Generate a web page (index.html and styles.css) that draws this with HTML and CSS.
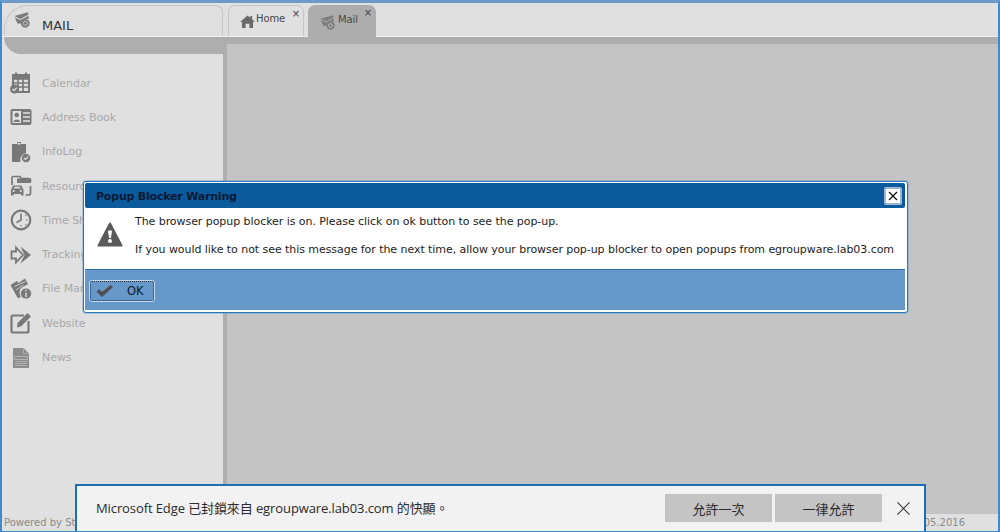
FILE: index.html
```
<!DOCTYPE html>
<html lang="en">
<head>
<meta charset="utf-8">
<title>MAIL</title>
<link rel="stylesheet" href="styles.css">
</head>
<body>
<svg class="defs" width="0" height="0" aria-hidden="true">
  <symbol id="i-mail" viewBox="0 0 22 22">
    <path d="M0.500 5.500 L19 0.500 L20 3.500 L9 9.500 Z" fill="currentColor"/>
    <path d="M1 7.500 L9 11 L20 5 L20.500 9.500 A6.500 6.500 0 0 0 12 15 L5 16 Z" fill="currentColor"/>
    <circle cx="15.500" cy="15.500" r="6" fill="currentColor"/>
    <circle cx="15.500" cy="15.500" r="2.800" fill="none" stroke="#d8d8d8" stroke-width="1"/>
  </symbol>
  <symbol id="i-home" viewBox="0 0 16 14">
    <path d="M0 7.500 L8 0.500 L11 3 L11 1 L13 1 L13 4.700 L16 7.500 L14 7.500 L14 14 L10 14 L10 9.500 L6 9.500 L6 14 L2 14 L2 7.500 Z" fill="currentColor"/>
  </symbol>
  <symbol id="i-calendar" viewBox="0 0 22 22">
    <path d="M3 3 H19 V20 H7 V17 H3 Z" fill="none" stroke="currentColor" stroke-width="2"/>
    <path d="M3 7 H19 M3 11 H19 M3 15 H19 M8 7 V20 M13 7 V20" stroke="currentColor" stroke-width="1.600" fill="none"/>
    <path d="M3 4 H20 V7 H3 Z" fill="currentColor"/>
    <rect x="5" y="0.500" width="2" height="4.500" fill="currentColor"/>
    <rect x="15" y="0.500" width="2" height="4.500" fill="currentColor"/>
    <circle cx="4.500" cy="17" r="4.500" fill="currentColor"/>
    <path d="M2.500 17 L4 18.500 L6.800 15.800" stroke="#e0e0e0" stroke-width="1.200" fill="none"/>
  </symbol>
  <symbol id="i-book" viewBox="0 0 22 18">
    <rect x="0.500" y="1" width="21" height="16" rx="2" fill="currentColor"/>
    <rect x="2.500" y="3" width="8.500" height="12" fill="#e2e2e2"/>
    <circle cx="6.700" cy="7" r="2.300" fill="currentColor"/>
    <path d="M3.500 14 C3.500 10.500 10 10.500 10 14 Z" fill="currentColor"/>
    <path d="M13 5 H20 M13 9 H20 M13 13 H20" stroke="#e2e2e2" stroke-width="1.500"/>
  </symbol>
  <symbol id="i-infolog" viewBox="0 0 22 22">
    <path d="M2 3 H7 V1 H11 V3 H16 V13 A6 6 0 0 0 10.500 21 H2 Z" fill="currentColor"/>
    <rect x="7.500" y="2" width="3" height="1.500" fill="#e0e0e0"/>
    <circle cx="16" cy="17" r="4.500" fill="currentColor" stroke="#e0e0e0" stroke-width="0.600"/>
    <path d="M13.800 17 L15.500 18.500 L18.200 15.600" stroke="#e0e0e0" stroke-width="1.200" fill="none"/>
  </symbol>
  <symbol id="i-resources" viewBox="0 0 22 22">
    <path d="M2 10 V3 A1.500 1.500 0 0 1 3.500 1.500 H10 L11 3.500 H19 A1.500 1.500 0 0 1 20.500 5 V7" fill="none" stroke="currentColor" stroke-width="1.700"/>
    <rect x="7" y="3.500" width="14" height="4.500" fill="currentColor"/>
    <path d="M20.500 11 V18 A2 2 0 0 1 18.500 20 H15.500" fill="none" stroke="currentColor" stroke-width="1.700"/>
    <path d="M1 15 L3 10.500 H11.500 L13.500 15 V20.500 H11 V19 H3.500 V20.500 H1 Z" fill="currentColor"/>
    <circle cx="3.700" cy="16" r="1.100" fill="#e0e0e0"/>
    <circle cx="10.800" cy="16" r="1.100" fill="#e0e0e0"/>
    <path d="M3.800 13.500 L4.800 11.700 H9.700 L10.700 13.500 Z" fill="#e0e0e0"/>
  </symbol>
  <symbol id="i-clock" viewBox="0 0 22 22">
    <circle cx="11" cy="11" r="9.300" fill="none" stroke="currentColor" stroke-width="2.200"/>
    <path d="M11 4.500 V11 L6.500 13.500" fill="none" stroke="currentColor" stroke-width="1.600"/>
    <path d="M15.500 6.500 L16.500 5.500 M17.500 11 H16 M15.500 15.500 L16.500 16.500 M11 17.500 V16" stroke="currentColor" stroke-width="1.200"/>
  </symbol>
  <symbol id="i-tracker" viewBox="0 0 22 22">
    <path d="M1.500 7.500 H6 V3.500 L13 11 L6 18.500 V14.500 H1.500 Z" fill="none" stroke="currentColor" stroke-width="1.800"/>
    <path d="M10.500 2.500 L21 11 L10.500 19.500 L14.500 11 Z" fill="currentColor"/>
  </symbol>
  <symbol id="i-files" viewBox="0 0 22 22">
    <path d="M0.500 7 L7 3 L8.500 5 L15 0.500 L18 6 L12 9.500 A6 6 0 0 0 11 18.500 L8 20.500 Z" fill="currentColor"/>
    <path d="M4.500 8.500 L15.500 3.500 M6 12 L13.500 7" stroke="#e0e0e0" stroke-width="0.800"/>
    <circle cx="16" cy="15.500" r="5.500" fill="currentColor" stroke="#e0e0e0" stroke-width="0.800"/>
    <path d="M16 14.500 V19 M16 11.800 V13" stroke="#e0e0e0" stroke-width="1.400"/>
  </symbol>
  <symbol id="i-web" viewBox="0 0 22 22">
    <path d="M14 3.500 H3 A1.500 1.500 0 0 0 1.500 5 V19 A1.500 1.500 0 0 0 3 20.500 H17 A1.500 1.500 0 0 0 18.500 19 V9" fill="none" stroke="currentColor" stroke-width="2.200"/>
    <path d="M7.500 11 L17.500 1 L21 4.500 L11 14.500 L7 15.500 Z" fill="currentColor"/>
  </symbol>
  <symbol id="i-news" viewBox="0 0 18 22">
    <path d="M1 1 H11.500 L17 6.500 V21 H1 Z" fill="currentColor"/>
    <path d="M2.500 9.500 H15.500 V12.500 H2.500 Z M3 14.500 H15 M3 16.500 H15 M3 18.500 H15" fill="none" stroke="#c4c4c4" stroke-width="0.700"/>
    <path d="M11.500 1 V6.500 H17" fill="none" stroke="#c4c4c4" stroke-width="0.600"/>
  </symbol>
</svg>

<div class="window">
  <header class="top">
    <div class="app-title">
      <svg class="app-icon"><use href="#i-mail"/></svg>
      <span class="app-name">MAIL</span>
    </div>
    <div class="tab">
      <svg class="tab-home"><use href="#i-home"/></svg>
      <span class="tab-label">Home</span>
      <span class="tab-x">×</span>
    </div>
    <div class="tab tab-active">
      <svg class="tab-mail"><use href="#i-mail"/></svg>
      <span class="tab-label">Mail</span>
      <span class="tab-x">×</span>
    </div>
  </header>
  <div class="main">
    <aside class="sidebar">
      <div class="cap"></div>
      <nav class="nav">
        <div class="nav-row"><svg class="nav-icon"><use href="#i-calendar"/></svg><span>Calendar</span></div>
        <div class="nav-row"><svg class="nav-icon"><use href="#i-book"/></svg><span>Address Book</span></div>
        <div class="nav-row"><svg class="nav-icon"><use href="#i-infolog"/></svg><span>InfoLog</span></div>
        <div class="nav-row"><svg class="nav-icon"><use href="#i-resources"/></svg><span>Resources</span></div>
        <div class="nav-row"><svg class="nav-icon"><use href="#i-clock"/></svg><span>Time Sheet</span></div>
        <div class="nav-row"><svg class="nav-icon"><use href="#i-tracker"/></svg><span>Tracking System</span></div>
        <div class="nav-row"><svg class="nav-icon"><use href="#i-files"/></svg><span>File Manager</span></div>
        <div class="nav-row"><svg class="nav-icon"><use href="#i-web"/></svg><span>Website</span></div>
        <div class="nav-row"><svg class="nav-icon nav-icon-soft"><use href="#i-news"/></svg><span>News</span></div>
      </nav>
    </aside>
    <div class="stage">
      <div class="band"></div>
      <div class="stage-row">
        <div class="splitter"></div>
        <main class="content"></main>
      </div>
    </div>
  </div>
  <footer class="footer">
    <span>Powered by Stylite</span>
    <span>05.2016</span>
  </footer>

  <div class="dialog" role="dialog">
    <div class="dialog-title">
      <span class="dialog-heading">Popup Blocker Warning</span>
      <button class="dialog-close" aria-label="Close">
        <svg class="close-glyph" viewBox="0 0 10 10"><path d="M1 1 L9 9 M9 1 L1 9"/></svg>
      </button>
    </div>
    <div class="dialog-body">
      <svg class="warn" viewBox="0 0 26 25">
        <path d="M13 1.500 L24.500 23.500 H1.500 Z" fill="#5a5a5a" stroke="#5a5a5a" stroke-width="2" stroke-linejoin="round"/>
        <path d="M11 8.500 H15 L14 16 H12 Z" fill="#fff"/>
        <circle cx="13" cy="19" r="2" fill="#fff"/>
      </svg>
      <div class="dialog-text">
        <p>The browser popup blocker is on. Please click on ok button to see the pop-up.</p>
        <p>If you would like to not see this message for the next time, allow your browser pop-up blocker to open popups from egroupware.lab03.com</p>
      </div>
    </div>
    <div class="dialog-actions">
      <button class="ok-btn">
        <svg class="ok-check" viewBox="0 0 17 12"><path d="M0.500 6.500 L3 4 L6 7 L14.500 0 L17 2 L6 12 Z" fill="#505050"/></svg>
        <span>OK</span>
      </button>
    </div>
  </div>

  <div class="edge-bar">
    <span class="edge-msg">Microsoft Edge 已封鎖來自 egroupware.lab03.com 的快顯。</span>
    <button class="edge-btn">允許一次</button>
    <button class="edge-btn">一律允許</button>
    <svg class="edge-x" viewBox="0 0 14 14"><path d="M0.500 0.500 L13.500 13.500 M13.500 0.500 L0.500 13.500"/></svg>
  </div>
</div>
</body>
</html>
```
FILE: styles.css
```
* { box-sizing: border-box; }
html, body { margin: 0; padding: 0; }
body { width: 1000px; height: 532px; overflow: hidden; font-family: "DejaVu Sans", sans-serif; }
.defs { position: absolute; }
button { font-family: inherit; margin: 0; padding: 0; }

.window {
  position: relative;
  width: 1000px;
  height: 532px;
  display: flex;
  flex-direction: column;
  background: #e1e0e0;
  border-top: 3px solid #6c9ac7;
  border-left: 2px solid #3f8ad2;
  border-right: 2px solid #3f8ad2;
  border-bottom: 1px solid #3f8ad2;
  overflow: hidden;
}

.top { height: 34px; display: flex; align-items: flex-end; padding-left: 2px; border-bottom: 1px solid #f0f0f0; flex: none; }
.app-title {
  width: 219px;
  height: 31px;
  display: flex;
  align-items: center;
  border: 1px solid #c6c6c6;
  border-bottom: 0;
  border-radius: 24px 7px 0 0;
  background: #e0dfdf;
}
.app-icon { width: 16px; height: 16px; margin: -2px 0 0 9px; color: #7c7c7c; flex: none; }
.app-name { margin-left: 12px; font-size: 13px; color: #333; position: relative; top: 4px; }

.tab {
  position: relative;
  width: 76px;
  height: 31px;
  margin-left: 5px;
  border: 1px solid #c6c6c6;
  border-bottom: 0;
  border-radius: 7px 7px 0 0;
  display: flex;
  align-items: flex-start;
  padding: 7px 0 0 11px;
  font-size: 10px;
  letter-spacing: -0.1px;
  color: #444;
}
.tab-active { width: 68px; height: 32px; margin-left: 4px; margin-bottom: -1px; padding-top: 8px; background: #adadad; border-color: #adadad; color: #484848; }
.tab-home { width: 15px; height: 13px; color: #6a6a6a; margin-top: 2px; margin-right: 1px; flex: none; }
.tab-mail { width: 15px; height: 15px; color: #7d7d7d; margin-top: 1px; margin-right: 3px; flex: none; }
.tab-label { line-height: 12px; }
.tab-x { position: absolute; right: 3px; top: 2px; font-size: 10px; line-height: 12px; color: #444; }
.tab-active .tab-x { top: 1px; }

.main { flex: 1; display: flex; min-height: 0; }
.sidebar { width: 221px; flex: none; display: flex; flex-direction: column; }
.cap { height: 17px; margin-left: 2px; background: #aeaeae; border-bottom-left-radius: 17px; flex: none; }
.nav { padding-top: 12px; }
.nav-row {
  height: 34.3px;
  display: flex;
  align-items: center;
  font-size: 11px;
  letter-spacing: -0.05px;
  color: #a8a8a8;
  white-space: nowrap;
}
.nav-icon { width: 22px; height: 22px; margin-left: 8px; margin-right: 10px; color: #787878; flex: none; }
.nav-icon-soft { color: #8c8c8c; }
.stage { flex: 1; display: flex; flex-direction: column; min-width: 0; }
.band { height: 7px; background: #aeaeae; flex: none; }
.stage-row { flex: 1; display: flex; min-height: 0; }
.splitter { width: 4px; background: #aeaeae; flex: none; }
.content { flex: 1; background: #c4c4c4; }

.footer {
  height: 17px;
  flex: none;
  display: flex;
  justify-content: space-between;
  align-items: center;
  padding: 0 33px 0 2px;
  font-size: 10px;
  color: #8a8a8a;
  background: #e1e0e0;
}

.dialog {
  position: absolute;
  left: 81px;
  top: 178px;
  width: 825px;
  height: 132px;
  display: flex;
  flex-direction: column;
  background: #fff;
  border: 1px solid #2a78bd;
  border-radius: 3px;
  box-shadow: 0 0 0 1px rgba(90, 150, 200, 0.4);
  padding: 1px 2px 2px 1px;
}
.dialog-title {
  height: 25px;
  display: flex;
  align-items: center;
  justify-content: space-between;
  padding: 0 3px 0 11px;
  background: #0a5a9c;
  border-radius: 2px;
  font-size: 11px;
  font-weight: 700;
  letter-spacing: -0.2px;
  color: #061b33;
  flex: none;
}
.dialog-heading { padding-top: 2px; }
.dialog-close {
  width: 18px;
  height: 18px;
  display: flex;
  align-items: center;
  justify-content: center;
  background: #fff;
  border: 2px solid #9db8d2;
  border-radius: 2px;
}
.close-glyph { width: 10px; height: 10px; stroke: #111; stroke-width: 1.300; fill: none; }

.dialog-body { height: 61px; display: flex; flex: none; background: #fff; }
.warn { width: 26px; height: 25px; margin: 14px 0 0 12px; flex: none; }
.dialog-text { margin-left: 12px; font-size: 11px; letter-spacing: -0.058px; color: #1c1c1c; white-space: nowrap; padding-top: 7px; }
.dialog-text p { margin: 0 0 14px; line-height: 14px; }

.dialog-actions { flex: 1; background: #6699c9; border-top: 1px solid #2a72b0; padding: 10px 0 0 4px; }
.ok-btn {
  width: 66px;
  height: 22px;
  display: flex;
  align-items: center;
  background: #6699c9;
  border: 1px solid #c6d9ec;
  border-radius: 3px;
  outline: 1px dotted #20334a;
  outline-offset: -2px;
  font-size: 11.500px;
  color: #0d1a28;
  padding-left: 6px;
}
.ok-check { width: 17px; height: 12px; margin-right: 14px; flex: none; }

.edge-bar {
  position: absolute;
  left: 73px;
  top: 481px;
  width: 851px;
  height: 48px;
  display: flex;
  align-items: center;
  background: #f2f2f2;
  border: 2px solid #1c6fb6;
  border-bottom: 0;
  padding: 0 0 2px 19px;
  font-family: "Open Sans", "Noto Sans CJK TC", sans-serif;
  color: #2a2a2a;
}
.edge-msg { font-size: 13px; letter-spacing: -0.1px; flex: 1; white-space: nowrap; padding-bottom: 2px; }
.edge-btn {
  width: 107px;
  height: 28px;
  margin-right: 3px;
  background: #c4c4c4;
  border: 0;
  font-family: "Noto Sans CJK TC", sans-serif;
  font-size: 13px;
  color: #2a2a2a;
  flex: none;
}
.edge-x { width: 13px; height: 13px; margin: 0 14px 0 12px; stroke: #333; stroke-width: 1.100; fill: none; flex: none; }
```
